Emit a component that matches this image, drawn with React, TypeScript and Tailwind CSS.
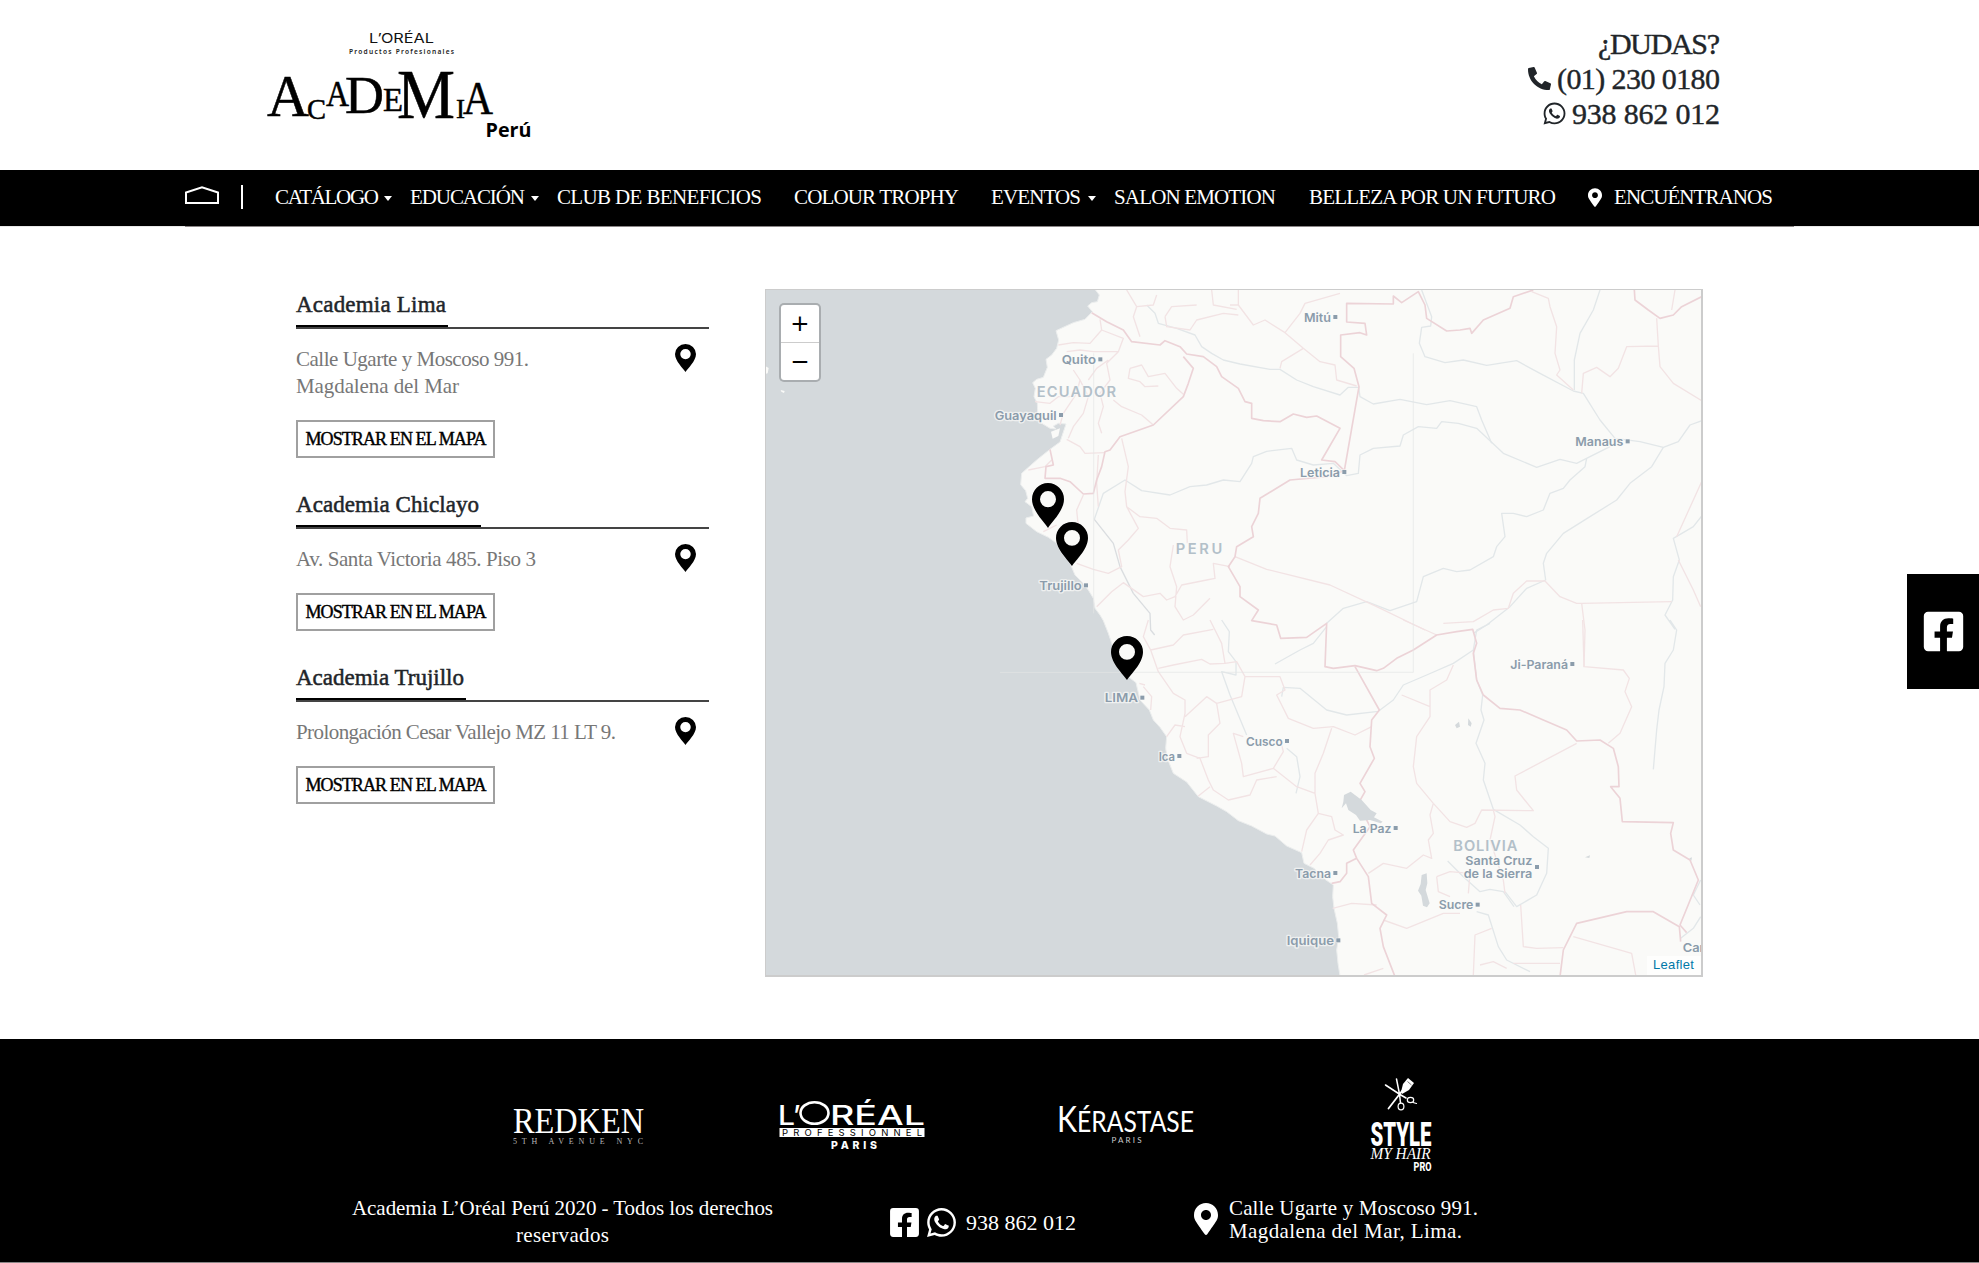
import { useLayoutEffect, useRef } from "react";
import type { ReactNode } from "react";
import { FaFacebookSquare, FaMapMarkerAlt, FaPhoneAlt, FaWhatsapp } from "react-icons/fa";

/* One line of text, tracked so that it fills exactly `w` pixels. */
function Fit({ w, children, className = "" }: { w: number; children: string; className?: string }) {
  const ref = useRef<HTMLSpanElement>(null);
  useLayoutEffect(() => {
    const el = ref.current;
    if (!el) return;
    el.style.letterSpacing = "0px";
    const natural = el.getBoundingClientRect().width;
    el.style.letterSpacing = `${(w - natural) / (children.length - 1)}px`;
  }, [w, children]);
  return (
    <span className={`block shrink-0 whitespace-nowrap ${className}`} style={{ width: w }}>
      <span ref={ref} className="inline-block">{children}</span>
    </span>
  );
}

function Pin({ className = "" }: { className?: string }) {
  return (
    <svg viewBox="0 0 96 133" preserveAspectRatio="none" className={className} fill="#000" fillRule="evenodd">
      <path d="M48 133C38 117 0 82 0 48A48 48 0 0 1 96 48C96 82 58 117 48 133ZM48 24a24 24 0 1 0 0 48a24 24 0 1 0 0-48Z" />
    </svg>
  );
}

function AcademiaLogo() {
  const letters: [string, number, number, number, number][] = [
    ["A", 267, 116, 60, 42],
    ["C", 307, 119, 29, 19],
    ["A", 326, 106, 36, 23],
    ["D", 345, 113, 52, 39],
    ["E", 383, 111, 34, 20],
    ["M", 397, 118, 69, 58],
    ["I", 456, 118, 28, 9],
    ["A", 463, 114, 46, 30],
  ];
  return (
    <svg viewBox="260 25 280 120" className="ml-[260px] mt-[25px] h-[120px] w-[280px] shrink-0">
      <g fontFamily="Inter" fill="#111">
        <text x="369" y="43" fontSize="13" textLength="65" lengthAdjust="spacingAndGlyphs">L’ORÉAL</text>
      </g>
      <text x="349" y="53.5" fontFamily="Noto Sans" fontWeight="600" fontSize="6.6" textLength="105" fill="#222">Productos Profesionales</text>
      <g fontFamily="Liberation Serif" fill="#000" stroke="#000" strokeWidth=".5">
        {letters.map(([c, x, y, size, w], i) => (
          <text key={i} x={x} y={y} fontSize={size} textLength={w} lengthAdjust="spacingAndGlyphs">{c}</text>
        ))}
      </g>
      <text x="485.500" y="137" fontFamily="Open Sans" fontWeight="700" fontSize="19.500" textLength="46" lengthAdjust="spacingAndGlyphs">Perú</text>
    </svg>
  );
}

function Caret({ className = "" }: { className?: string }) {
  return <span className={`h-0 w-0 shrink-0 border-x-[4.500px] border-t-[5px] border-x-transparent border-t-white ${className}`} />;
}

function Nav() {
  return (
    <nav className="h-[57px] bg-[linear-gradient(#000_56px,#e9e9e9_56px)]">
      <div className="ml-[185px] flex h-[57px] w-[1609px] items-center border-b border-[#8a8586] pb-[1px] text-[21px] leading-none text-white">
        <svg viewBox="0 0 34 18" className="-mt-[6px] h-[18px] w-[34px] shrink-0" fill="none" stroke="#fff" strokeWidth="2">
          <path d="M1 17V6.500L17 1.200L33 6.500V17Z" />
        </svg>
        <span className="-mt-[1px] ml-[22px] h-[24px] w-[2px] shrink-0 bg-white" />
        <Fit w={104} className="ml-[32px]">CATÁLOGO</Fit>
        <Caret className="ml-[5px] mt-[2px]" />
        <Fit w={115} className="ml-[18px]">EDUCACIÓN</Fit>
        <Caret className="ml-[6px] mt-[2px]" />
        <Fit w={205} className="ml-[18px]">CLUB DE BENEFICIOS</Fit>
        <Fit w={165} className="ml-[32px]">COLOUR TROPHY</Fit>
        <Fit w={90} className="ml-[32px]">EVENTOS</Fit>
        <Caret className="ml-[7px] mt-[2px]" />
        <Fit w={162} className="ml-[18px]">SALON EMOTION</Fit>
        <Fit w={247} className="ml-[33px]">BELLEZA POR UN FUTURO</Fit>
        <FaMapMarkerAlt className="ml-[32px] h-[19px] w-[14px] shrink-0" />
        <Fit w={159} className="ml-[12px]">ENCUÉNTRANOS</Fit>
      </div>
    </nav>
  );
}

function Branch({ title, w, lines, className }: { title: string; w: number; lines: [string, number][]; className: string }) {
  return (
    <section className={className}>
      <div className="flex border-b-2 border-[#444]">
        <h3 className="h-[38px] border-b-2 border-black pr-[2px] text-[23px] leading-[32px] text-[#212529] [-webkit-text-stroke:0.5px_#212529]">
          <Fit w={w}>{title}</Fit>
        </h3>
      </div>
      <div className="mt-[15px] flex items-start justify-between">
        <div className="mt-[2px] text-[21px] leading-[27px] text-[#777]">
          {lines.map(([t, lw]) => (
            <Fit key={t} w={lw}>{t}</Fit>
          ))}
        </div>
        <Pin className="mr-[13px] h-[28px] w-[21px]" />
      </div>
      <button className="mt-[20px] flex h-[38px] w-[199px] items-center justify-center border-2 border-[#a0a0a0] bg-white text-[18px] leading-none text-black [-webkit-text-stroke:0.4px_#000]">
        <Fit w={181}>MOSTRAR EN EL MAPA</Fit>
      </button>
    </section>
  );
}

type Label = [string, number, number, number, number?];
const cities: Label[] = [
  ["Quito", 905, 252, 103, 1], ["Guayaquil", 704, 419, 186, 1], ["Trujillo", 838, 930, 127, 1],
  ["Mitú", 1632, 125, 81, 1], ["Leticia", 1620, 590, 120, 1], ["Manaus", 2446, 498, 144, 1],
  ["LIMA", 1034, 1267, 100, 1], ["Cusco", 1458, 1397, 110, 1], ["Ica", 1196, 1442, 49, 1],
  ["Tacna", 1605, 1793, 108, 1], ["Iquique", 1580, 1995, 142, 1], ["Ji-Paraná", 2251, 1166, 173, 1],
  ["La Paz", 1778, 1658, 116, 1], ["Santa Cruz", 2116, 1756, 201], ["de la Sierra", 2111, 1794, 206],
  ["Sucre", 2036, 1888, 104, 1], ["Car", 2768, 2016, 66],
];
const countries: Label[] = [["ECUADOR", 830, 350, 238], ["PERU", 1247, 822, 140], ["BOLIVIA", 2080, 1712, 192]];

function PeruMap() {
  return (
    <svg viewBox="18 30 2805 2055" className="block h-full w-full" strokeLinejoin="round">
      <rect x="0" y="0" width="2900" height="2200" fill="#d4d9dc" />
      <path fill="#fafaf8" stroke="#eceeee" strokeWidth="3" d="M1005 0V28L1018 45 1012 65 995 68 983 78 997 95 975 118 940 128 888 152 896 180 890 205 875 225 858 238 862 262 850 292 830 298 818 308 826 325 822 350 832 370 833 400 842 428 870 445 888 447 880 438 895 430 918 432 912 450 900 486 870 508 830 540 785 580 782 614 797 632 803 655 795 665 815 680 821 708 798 714 798 730 830 755 865 772 890 790 905 820 930 850 945 885 965 905 985 930 1000 955 1005 985 1020 1005 1030 1022 1045 1060 1058 1098 1080 1130 1105 1190 1128 1208 1140 1260 1168 1290 1180 1320 1200 1342 1220 1370 1217 1405 1222 1435 1240 1480 1280 1506 1315 1550 1370 1578 1400 1595 1435 1622 1475 1638 1520 1662 1545 1668 1580 1698 1625 1718 1632 1750 1662 1765 1695 1798 1720 1815 1718 1850 1722 1885 1732 1930 1736 1970 1730 2010 1734 2050 1742 2100H2900V0Z" />
      <path fill="#fafaf8" d="M873 455L900 445 895 468 878 476ZM16 258l10 6 -3 16 -8 2ZM62 330l12 3 -2 6 -8-4Z" />
      <g fill="none" stroke="#e2e7e9" strokeWidth="4">
        <path d="M1160 75L1185 100 1195 130 1250 145 1305 165 1325 200 1355 220 1390 240 1440 252 1530 268 1560 268 1610 300 1660 320 1740 345 1765 322 1796 322 1800 350 1840 372 1920 358 2000 374 2070 362 2150 380 2165 420 2195 490" />
        <path d="M1985 30L2015 110 2012 138 1985 142 1978 190 1995 230 2055 248 2110 240 2180 256 2270 242 2340 280 2440 333 2470 340 2520 420 2565 475 2640 485 2710 502 2755 485 2790 435 2825 422" />
        <path d="M2520 30L2500 90 2460 160 2443 240 2443 330" />
        <path d="M1003 718L1030 640 1095 600 1145 632 1230 645 1290 620 1340 615 1390 600 1440 605 1475 550 1480 530 1520 514 1595 505 1610 540 1660 555 1720 550 1760 587 1795 580 1800 525 1840 505 1920 498 1930 465 1975 440 2030 445 2045 425 2095 430 2150 445 2230 520 2330 562 2400 538 2450 550 2490 530 2550 500" />
        <path d="M2480 535L2475 560 2430 600 2410 625 2370 640 2350 690 2300 710 2260 700 2225 700 2235 770 2210 800 2200 830 2130 870 2090 875 2050 865 1990 890 1970 965 1890 992 1820 965 1750 985 1700 1030" />
        <path d="M2710 502L2675 560 2610 610 2570 660 2490 710 2410 760 2360 820 2350 850 2357 900 2300 925 2250 980 2180 1035 2140 1060" />
        <path stroke="#dadde0" d="M1003 718L1060 790 1080 860 1120 940 1170 1000 1172 1050 1184 1065" />
        <path d="M1385 1020L1408 1055 1405 1115 1428 1145 1428 1185 1385 1175 1410 1245 1460 1365M1580 1405L1610 1430 1620 1490 1608 1540M1700 1040L1660 1090 1620 1110 1545 1152M1565 1250L1570 1222 1620 1225 1700 1290 1760 1305 1855 1294 1900 1260 1930 1215 2000 1185 2080 1150 2140 1110 2150 1050 2190 1030" />
        <path d="M2140 1110L2150 1200 2168 1245 2163 1290 2172 1320 2148 1390 2175 1450 2170 1500 2200 1588 2280 1635 2320 1670 2365 1705 2360 1780 2330 1845 2270 1880 2235 1835" />
        <path d="M2063 1743L2110 1790 2160 1835 2190 1828 2230 1835 2262 1880M2150 1895L2185 1905 2215 2000 2240 2040 2310 2075" />
        <path d="M2730 1020L2750 1050 2740 1110 2715 1150 2712 1220 2697 1290 2690 1350 2680 1468M2825 708L2800 740 2740 775 2758 840 2740 890 2738 960 2715 1005 2745 1048" />
        <path d="M2822 1910L2800 1945 2762 1975M2822 1800L2800 1845 2820 1875" />
      </g>
      <g fill="none" stroke="#f2e3e4" strokeWidth="4">
        <path d="M1020 118L1025 150 990 190 940 188 895 195M1025 150L1090 175 1075 215 1000 215 960 210 920 215M1075 215L1040 250 1050 300 1020 340 1030 380 1015 430 1025 460M940 270L960 300 950 340 910 400 900 435M960 300L985 350 970 400 940 440 925 475M985 300L1010 265 1045 240M1110 265L1145 255 1165 290 1215 280 1250 325 1270 343M1110 265L1105 295 1140 305 1155 320 1195 318M825 365L870 370 895 350 930 350M1060 360L1085 380 1145 405 1180 435M1100 30L1130 80 1120 110 1140 170M1130 80L1180 75 1190 45M1215 110L1220 140 1290 150 1310 120 1390 100 1435 105M1215 110L1235 80 1310 75M1355 30L1360 75 1430 88" />
        <path d="M920 478L960 500 975 520 1035 518M875 540L855 560 805 570M1085 475L1105 560 1095 635 1100 680 1140 710 1190 715 1230 745 1280 750 1282 790M1100 680L1135 745 1105 780 1075 810 1085 860 1045 880 1000 868 950 850M970 645L950 690 955 740M890 735L850 755M1010 980L1055 935 1090 908 1150 950 1200 940 1220 960 1245 950 1265 915 1340 900M1240 795L1230 860 1250 920 1245 980 1270 1020 1300 1005 1350 955M1340 900L1365 895 1360 850 1410 860M1015 525L1010 610 1015 680" />
        <path d="M1435 30V75H1410M1435 75L1480 135 1515 120 1575 158 1620 100 1635 70 1740 40M1575 158L1630 205 1680 245 1725 255 1730 300 1790 318M1630 205L1565 245 1560 265M2315 35L2365 55 2370 80 2390 140 2385 220 2400 270 2390 285 2440 330M2465 340L2470 280 2510 262 2550 290 2575 265 2600 200 2695 198 2690 115M2695 198L2700 260 2740 310 2825 362M2745 30L2735 90M1425 830L1520 868 1710 915 1850 980 1995 1050M2050 1030L2140 1025 2200 990 2245 985 2260 940 2300 903 2355 903 2400 950 2450 970 2465 970 2735 965M2465 970L2475 1050 2472 1160 2590 1170 2608 1195 2595 1235 2615 1280 2580 1360 2545 1390M2825 605L2750 770M2755 840L2800 930 2822 980" />
        <path d="M1165 1020L1150 1070 1172 1110 1195 1175 1240 1240 1275 1260 1275 1300 1260 1370 1280 1420 1320 1435 1345 1500 1360 1530 1405 1560 1470 1545 1490 1500 1550 1490M1172 1110L1240 1095 1270 1065 1360 1048M1195 1165L1240 1155 1325 1138 1350 1152 1395 1150 1430 1145 1455 1190 1445 1250 1370 1270 1340 1250 1275 1310M1350 1020L1385 1090 1395 1150M1370 1270L1380 1330 1345 1365 1345 1430 1310 1435M1455 1190L1560 1190 1575 1230 1550 1245 1585 1315 1660 1345 1720 1340 1785 1365 1835 1340M1715 1345L1690 1420 1665 1480 1665 1540 1675 1600 1640 1650 1625 1715M1665 1540L1610 1520 1540 1465 1570 1415 1565 1395M1540 1465L1450 1490 1445 1450 1420 1360 1450 1370M1315 1548L1350 1520M1675 1600L1715 1610 1725 1650 1750 1665 1705 1680 1680 1720 1650 1755M1718 1885L1775 1870 1850 1875M1220 1370L1245 1335 1275 1340M1150 1220L1175 1250 1172 1290M1138 1210L1155 1215" />
        <path d="M1930 1020L2030 1065M1925 1245L2010 1280M2080 1155L2060 1200 2010 1230 2010 1310 1970 1370 1960 1460 1970 1510 2020 1570 2070 1625 2120 1642 2145 1630 2165 1590 2320 1592 2270 1530 2265 1488 2450 1390M2020 1570L2010 1605 2020 1660 2005 1680 2015 1735 1990 1725 1940 1765 1870 1750 1825 1780M1870 1920L1940 1945 2050 1900 2100 1900M2200 1590L2205 1610 2190 1680 2230 1800 2235 1840M2030 1790L2070 1775 2130 1780 2125 1840M2030 1790L2035 1835 2070 1850M2282 1875L2290 2000 2330 2005 2410 2003M2195 1945L2145 1965 2140 2085M2260 2050H2400M2440 1970L2615 2020 2628 2090M2160 2055L2200 2045 2240 2065M1812 2085L1870 2065" />
        <path d="M2468 1020L2472 1160" />
      </g>
      <g fill="none" stroke="#ecd3d7" strokeWidth="5">
        <path d="M995 98L1040 125 1090 150 1115 185 1200 195 1215 182 1260 200 1280 222 1330 230 1370 260 1385 290 1435 325 1455 365 1475 370 1475 415 1510 422 1560 425 1600 402 1640 412 1670 408 1740 445 1685 540 1725 545 1753 572 1797 320 1782 265 1742 230V165L1800 158 1820 165 1815 130 1760 126V70L1900 72 1900 48 1925 68 1975 35 1995 75 2000 115 2060 153 2100 150 2130 145 2135 160 2170 120 2250 85 2260 50 2320 30" />
        <path d="M1270 230L1300 265 1285 310 1270 350 1180 435 1080 470 1050 510 1035 515 1025 560 1010 600 1000 640 970 642 930 605 900 595 855 595 858 560 880 555 870 508M1753 572L1700 590 1590 600 1500 655 1495 700 1475 740 1480 770 1430 800 1425 830 1405 860 1440 920 1440 950 1495 990 1475 1022 1550 1035 1562 1075 1640 1072 1700 1030 1695 1160 1720 1165 1785 1157 1850 1172 1870 1165 1910 1135 1960 1110 2030 1065 2090 1055 2138 1048 2150 1090 2140 1120 2150 1200 2170 1245 2220 1285 2280 1290 2350 1320 2420 1350 2450 1383 2520 1380 2560 1405 2575 1460 2577 1520 2552 1520 2580 1555 2587 1625 2740 1628 2732 1660 2740 1710 2790 1740 2815 1800 2760 1935 2780 1958" />
        <path d="M1785 1160L1858 1290 1835 1320 1830 1400 1843 1435 1800 1510 1815 1535 1795 1570 1830 1640 1780 1710 1790 1735 1825 1790 1835 1870 1880 1905 1860 1945 1870 2000 1905 2090M1790 1735L1760 1750 1760 1780 1740 1805 1715 1810M2400 2090L2410 2010 2450 1930 2600 1895 2680 1895 2758 1940 2762 1985M2623 30L2625 60 2665 90 2700 115 2740 105 2765 80 2825 50" />
      </g>
      <path d="M720 1177H1960M1001 220V1000M1960 220V1177" fill="none" stroke="#e4e6e6" strokeWidth="2" />
      <path fill="#d4d9dc" d="M1752 1545L1772 1535 1805 1560 1832 1590 1850 1600 1842 1612 1868 1625 1862 1630 1830 1620 1800 1622 1788 1605 1765 1590 1758 1570 1745 1585 1750 1565ZM1985 1785l15-5 2 30 -5 20 12 40 -8 12 -12-5 -5-30 -10-15 8-20ZM2085 1335l12-10 3 15 -10 5ZM2125 1315l10 15 -3 10 -8-5ZM2475 1732l15-6 -2 8ZM2788 1735l8-3 -2 10Z" />
      <g fontFamily="Inter" stroke="#fafaf8" strokeOpacity=".7" strokeWidth="8" paintOrder="stroke">
        {cities.map(([t, x, y, w, dot]) => (
          <g key={t} fill="#8b9cab">
            <text x={x} y={y} fontSize="36" fontWeight="600" textLength={w} lengthAdjust="spacingAndGlyphs">{t}</text>
            {dot ? <rect x={x + w + 7} y={y - 20} width="12" height="12" strokeWidth="4" /> : null}
          </g>
        ))}
        <rect x="2325" y="1755" width="12" height="12" fill="#8b9cab" strokeWidth="4" />
        {countries.map(([t, x, y, w]) => (
          <text key={t} x={x} y={y} fill="#b3c0c9" fontSize="44" fontWeight="600" textLength={w}>{t}</text>
        ))}
      </g>
    </svg>
  );
}

function MapPanel() {
  return (
    <div className="relative ml-[56px] h-[688px] w-[938px] shrink-0 border border-b-2 border-r-2 border-[#ccc] overflow-hidden">
      <PeruMap />
      <Pin className="absolute left-[266px] top-[193px] h-[45px] w-[32px]" />
      <Pin className="absolute left-[290px] top-[232px] h-[44px] w-[32px]" />
      <Pin className="absolute left-[345px] top-[346px] h-[44px] w-[32px]" />
      <div className="absolute left-[13px] top-[13px] flex h-[79px] w-[42px] flex-col overflow-hidden rounded-[5px] border-2 border-black/20 bg-white bg-clip-padding text-center font-['DejaVu_Sans'] text-[23px] leading-[37px] text-black">
        <span className="h-[38px] border-b border-[#ccc]">+</span>
        <span className="h-[37px]">−</span>
      </div>
      <a className="absolute bottom-0 right-0 h-[19px] w-[54px] bg-white/70 pl-[6px] font-['Liberation_Sans'] text-[13px] leading-[18px] text-[#0078A8]">
        <Fit w={41}>Leaflet</Fit>
      </a>
    </div>
  );
}

function Logo({ box, className, children }: { box: string; className: string; children: ReactNode }) {
  return <svg viewBox={box} className={`shrink-0 ${className}`} fill="#fff">{children}</svg>;
}

function BrandLogos() {
  return (
    <div className="flex h-[154px] items-start pl-[513px] pt-[31px]">
      <Logo box="513 1070 132 110" className="h-[110px] w-[132px]">
        <text x="513" y="1133" fontFamily="Liberation Serif" fontSize="36" textLength="131" lengthAdjust="spacingAndGlyphs">REDKEN</text>
        <text x="513" y="1143.500" fontFamily="Liberation Serif" fontSize="8" textLength="130" fill="#bbb">5TH AVENUE NYC</text>
      </Logo>
      <Logo box="779 1070 147 110" className="ml-[134px] h-[110px] w-[147px]">
        <g fontFamily="Inter" fontWeight="500">
          <text x="778" y="1124.500" fontSize="27" textLength="17" lengthAdjust="spacingAndGlyphs">L</text>
          <text x="793" y="1124.500" fontSize="27">’</text>
          <ellipse cx="814.500" cy="1113" rx="14" ry="10.800" fill="none" stroke="#fff" strokeWidth="2.600" />
          <text x="830" y="1124.500" fontSize="27" textLength="95" lengthAdjust="spacingAndGlyphs">RÉAL</text>
          <rect x="779.500" y="1128" width="145" height="9" />
          <text x="782" y="1136" fontSize="9.500" fontWeight="400" fill="#000" textLength="140">PROFESSIONNEL</text>
          <text x="831" y="1149" fontSize="10.500" fontWeight="800" textLength="46">PARIS</text>
        </g>
      </Logo>
      <Logo box="1059 1070 136 110" className="ml-[133px] h-[110px] w-[136px]">
        <g fontFamily="Lato">
          <text x="1057" y="1132" fontSize="37" textLength="20" lengthAdjust="spacingAndGlyphs">K</text>
          <text x="1077" y="1132" fontSize="28" textLength="117" lengthAdjust="spacingAndGlyphs">ÉRASTASE</text>
          <text x="1111.500" y="1143" fontSize="8" textLength="30" fill="#ccc">PARIS</text>
        </g>
      </Logo>
      <Logo box="1370 1070 63 110" className="ml-[175px] h-[110px] w-[63px]">
        <g stroke="#fff" strokeLinecap="round" fill="none">
          <path d="M1385.500 1085L1400 1094.500L1406 1098M1396.500 1079L1399.500 1094L1400.500 1103" strokeWidth="1.500" />
          <path d="M1388.500 1108.500L1402 1091" strokeWidth="1.800" />
          <ellipse cx="1401" cy="1106.500" rx="2.900" ry="3.300" strokeWidth="1.200" />
          <ellipse cx="1410.500" cy="1100" rx="3.200" ry="2.600" strokeWidth="1.200" />
          <path d="M1413 1102.500L1416.500 1103.500" strokeWidth="1.200" />
        </g>
        <path d="M1401 1092L1403 1084L1408 1078L1414 1083L1409 1090L1402 1094Z" />
        <path d="M1407.500 1081.500L1411.500 1085" stroke="#777" strokeWidth="1" />
        <text x="1370.500" y="1145.500" fontFamily="Roboto" fontWeight="900" fontSize="34" textLength="61" lengthAdjust="spacingAndGlyphs">STYLE</text>
        <text x="1370.500" y="1159" fontFamily="Liberation Serif" fontStyle="italic" fontSize="16" textLength="60" lengthAdjust="spacingAndGlyphs">MY HAIR</text>
        <text x="1413.500" y="1171" fontFamily="Roboto" fontWeight="800" fontSize="13.500" textLength="18" lengthAdjust="spacingAndGlyphs">PRO</text>
      </Logo>
    </div>
  );
}

export default function App() {
  return (
    <div className="relative flex h-[1263px] w-[1979px] flex-col overflow-hidden bg-white font-['Liberation_Serif',serif]">
      <header className="flex h-[170px] shrink-0 items-start justify-between">
        <AcademiaLogo />
        <div className="mr-[259px] mt-[26px] flex flex-col items-end text-[30px] leading-[35px] text-[#212529] [-webkit-text-stroke:0.4px_#212529]">
          <Fit w={122}>¿DUDAS?</Fit>
          <div className="flex items-center">
            <FaPhoneAlt className="mr-[6px] h-[23px] w-[23px]" />
            <Fit w={163}>(01) 230 0180</Fit>
          </div>
          <div className="flex items-center">
            <FaWhatsapp className="mr-[5px] h-[25px] w-[25px]" />
            <Fit w={148}>938 862 012</Fit>
          </div>
        </div>
      </header>
      <Nav />
      <main className="flex h-[812px] shrink-0 items-start pl-[296px] pt-[62px]">
        <div className="w-[413px] shrink-0">
          <Branch className="h-[200px]" title="Academia Lima" w={150} lines={[["Calle Ugarte y Moscoso 991.", 233], ["Magdalena del Mar", 163]]} />
          <Branch className="h-[173px]" title="Academia Chiclayo" w={183} lines={[["Av. Santa Victoria 485. Piso 3", 240]]} />
          <Branch className="h-[173px]" title="Academia Trujillo" w={168} lines={[["Prolongación Cesar Vallejo MZ 11 LT 9.", 320]]} />
        </div>
        <MapPanel />
      </main>
      <footer className="h-[224px] shrink-0 border-b border-[#8a8586] bg-black text-white">
        <BrandLogos />
        <div className="flex items-start pl-[352px] text-[21px]">
          <div className="mt-[2px] flex w-[421px] flex-col items-center leading-[27px]">
            <Fit w={421}>Academia L’Oréal Perú 2020 - Todos los derechos</Fit>
            <Fit w={93}>reservados</Fit>
          </div>
          <div className="ml-[115px] mt-[13px] flex items-center">
            <FaFacebookSquare className="h-[33px] w-[33px]" />
            <FaWhatsapp className="ml-[4px] h-[33px] w-[33px]" />
            <Fit w={110} className="ml-[8px] text-[22px]">938 862 012</Fit>
          </div>
          <FaMapMarkerAlt className="ml-[118px] mt-[10px] h-[32px] w-[24px]" />
          <div className="ml-[11px] mt-[4px] leading-[23px]">
            <Fit w={249}>Calle Ugarte y Moscoso 991.</Fit>
            <Fit w={233}>Magdalena del Mar, Lima.</Fit>
          </div>
        </div>
      </footer>
      <aside className="absolute right-0 top-[574px] flex h-[115px] w-[72px] items-center justify-center bg-black text-white">
        <FaFacebookSquare className="h-[45px] w-[45px]" />
      </aside>
    </div>
  );
}
